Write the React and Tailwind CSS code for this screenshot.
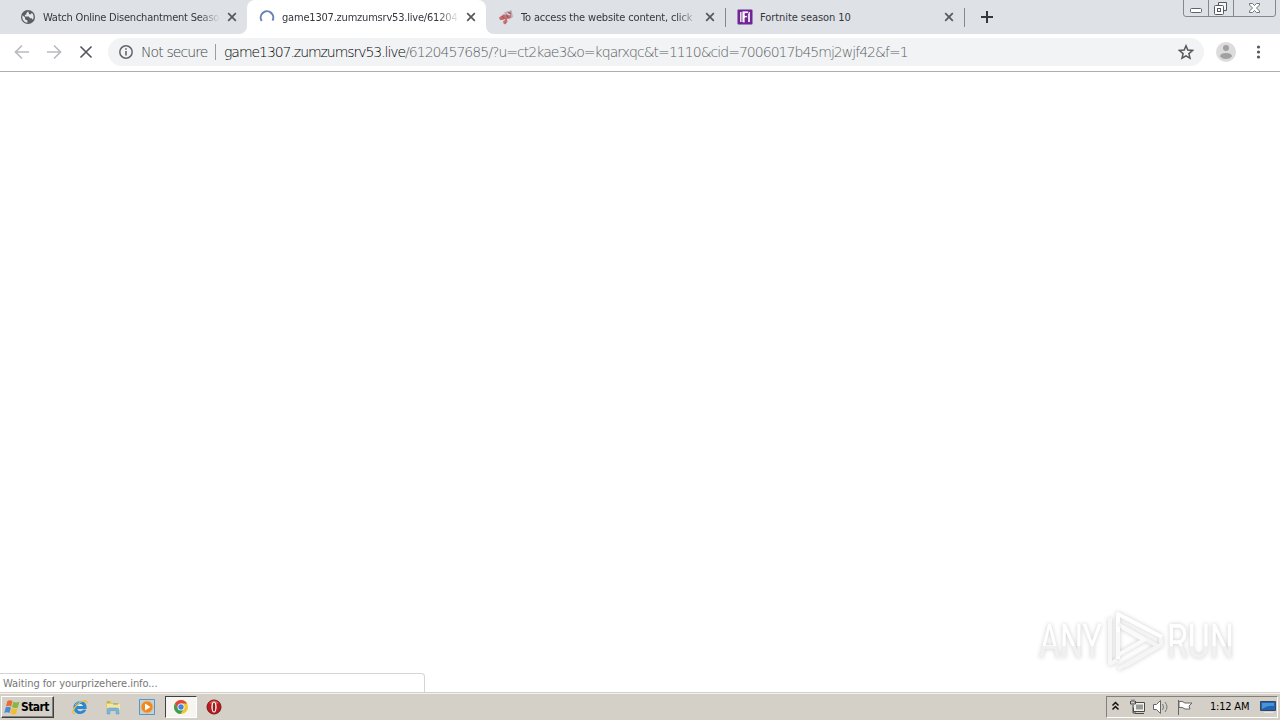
import React from 'react';
import clsx from 'clsx';

const GlobeIcon = () => (
  <svg width="16" height="16" viewBox="0 0 16 16">
    <circle cx="8" cy="8" r="7" fill="#5a5f66" />
    <path d="M2.600 6.200 5 8.600v1.600l2.400 1.200v2.300C4.500 13.500 2.300 11 2.300 8Z" fill="#e6e8ec" />
    <path d="M8.200 2.300 6.300 4.200v1.500H4.900v1.700h3.800l1.400 1.900h1.600l1.200 1.400c1.400-2.600.6-5.500-1.200-7l-.7 1.500H9.200Z" fill="#e6e8ec" />
  </svg>
);

const Spinner = () => (
  <svg width="16" height="16" viewBox="0 0 16 16" fill="none">
    <path d="M2.700 12A6.300 6.300 0 1 1 13.500 11.600" stroke="#6482b4" strokeWidth="2" />
  </svg>
);

const MegaphoneIcon = () => (
  <svg width="16" height="16" viewBox="0 0 16 16">
    <path d="M6 3.500 13.500 1l1.500 7-4 2.500Z" fill="#b9aeb4" />
    <path d="M1 8.500 6 5l2 1.500 4.500-4 .5 6-4 1.500.5 2.500-2 3-2-1-.5-3.500L2 11Z" fill="#c66d70" />
    <path d="m4 7 2.500 3M8 5.500 10.500 9M10 3.500l3 1" stroke="#8e565d" strokeWidth="1" />
    <path d="M9 4.500 12 6M5 11.500l2-1" stroke="#eed9dc" strokeWidth="1.200" />
  </svg>
);

const FortniteIcon = () => (
  <svg width="16" height="16" viewBox="0 0 16 16">
    <rect x="0.500" y="0.500" width="15" height="15" rx="1" fill="#6f2592" />
    <path d="M3 3h2v10H3zM11 3h2v10h-2z" fill="#e9d9ef" />
    <path d="M5 2h6.500l-.3 2.500H8v2h2.300v2.300H8V14l-3-.5Z" fill="#fff" stroke="#6f2592" strokeWidth=".8" />
  </svg>
);

const CloseIcon = () => (
  <svg width="10" height="10" viewBox="0 0 10 10" className="shrink-0">
    <path d="m1.200 1.200 7.600 7.600M8.800 1.200 1.200 8.800" stroke="#55585d" strokeWidth="1.700" />
  </svg>
);

const tabs = [
  { title: 'Watch Online Disenchantment Seaso', icon: <GlobeIcon />, spacing: 'tracking-[-0.22px]', fade: true },
  { title: 'game1307.zumzumsrv53.live/61204', icon: <Spinner />, spacing: 'tracking-[-0.2px]', active: true, fade: true },
  { title: 'To access the website content, click', icon: <MegaphoneIcon />, spacing: 'tracking-[-0.16px]', fade: true, divider: true },
  { title: 'Fortnite season 10', icon: <FortniteIcon />, spacing: 'tracking-[-0.07px]', divider: true },
];

const Tab = ({ tab }) => (
  <div className={clsx('relative flex h-[34px] w-[239px] items-center pl-3', tab.active && 'rounded-t-lg bg-white')}>
    {tab.active && (
      <>
        <svg className="absolute bottom-0 -left-2" width="8" height="8"><path d="M8 0v8H0A8 8 0 0 0 8 0Z" fill="#fff" /></svg>
        <svg className="absolute -right-2 bottom-0" width="8" height="8"><path d="M0 0v8h8A8 8 0 0 1 0 0Z" fill="#fff" /></svg>
      </>
    )}
    <span className="shrink-0">{tab.icon}</span>
    <span
      className={clsx(
        'ml-[7px] w-[177px] shrink-0 overflow-hidden pt-px text-[11px] leading-4 whitespace-nowrap text-[#34373c]',
        tab.spacing,
        tab.fade && '[mask-image:linear-gradient(to_right,black_88%,transparent)]'
      )}
    >
      {tab.title}
    </span>
    <span className="ml-[7px] flex"><CloseIcon /></span>
    {tab.divider && <span className="absolute top-[8px] -right-px h-[19px] w-px bg-[#85888e]" />}
  </div>
);

const WindowControls = () => (
  <svg width="93" height="18" viewBox="0 0 93 18" fill="none" className="ml-auto mr-1 self-start">
    <path d="M.5 0v14q0 2.500 2.500 2.500h87q2.500 0 2.500-2.500V0M25.500 0v16M50.500 0v16" stroke="#85888e" />
    <rect x="7.500" y="8.500" width="11" height="4" rx="1" fill="#fff" stroke="#606368" />
    <path d="M35.500 5V2.500h8v8H41" stroke="#55585d" fill="#f5f6f8" />
    <rect x="31.500" y="5.500" width="9" height="9" rx="1" fill="#fff" stroke="#55585d" />
    <rect x="34.500" y="8.500" width="3" height="3" stroke="#55585d" />
    <path d="M66.500 3.500h3l2 2 2-2h3v1.500L73.500 8l3 3v1.500h-3l-2-2-2 2h-3V11l3-3-3-3Z" fill="#fff" stroke="#70747a" />
  </svg>
);

const Toolbar = () => (
  <div className="flex h-[38px] items-center border-b border-[#adadad] bg-white">
    <svg width="108" height="36" viewBox="0 0 108 36" fill="none" strokeWidth="1.700" className="-mt-0.5 shrink-0">
      <path d="M29 18H16M22 11.500 15.500 18l6.500 6.500" stroke="#b9bbbe" />
      <path d="M47 18h13M54 11.500l6.500 6.500-6.500 6.500" stroke="#b9bbbe" />
      <path d="m80.500 12.500 11 11M91.500 12.500l-11 11" stroke="#55585d" strokeWidth="1.700" />
    </svg>
    <div className="-mt-0.5 flex h-7 w-[1096px] items-center rounded-full bg-[#f1f3f4] pl-[10px] font-['DejaVu_Sans_Light','DejaVu_Sans_Condensed',sans-serif] text-[14px] font-extralight">
      <svg width="16" height="16" viewBox="0 0 16 16" fill="none">
        <circle cx="8" cy="8" r="6.200" stroke="#62666b" strokeWidth="1.500" />
        <path d="M8 7v4.500M8 4.200v1.600" stroke="#62666b" strokeWidth="1.600" />
      </svg>
      <span className="ml-[7px] w-[74px] pt-0.5 whitespace-nowrap tracking-[-0.9px] text-[#404348]">Not secure</span>
      <span className="h-4 w-px bg-[#9a9da1]" />
      <span className="ml-2 pt-0.5 whitespace-nowrap text-[#5c6064]">
        <span className="tracking-[-1.05px] text-black">game1307.zumzumsrv53.live</span>
        <span className="tracking-[-0.97px]">/6120457685/?u=ct2kae3&amp;o=kqarxqc&amp;t=1110&amp;cid=7006017b45mj2wjf42&amp;f=1</span>
      </span>
      <svg width="16" height="16" viewBox="0 0 16 16" className="mr-[10px] ml-auto" fill="none">
        <path d="m8 1.800 1.800 4.300 4.700.4-3.600 3.100 1.100 4.600L8 11.800l-4 2.400 1.100-4.600-3.600-3.100 4.700-.4Z" stroke="#55585d" strokeWidth="1.500" />
      </svg>
    </div>
    <svg width="76" height="36" viewBox="0 0 76 36" className="-mt-0.5">
      <circle cx="22" cy="18" r="10" fill="#dcdcdc" />
      <circle cx="22" cy="14" r="3" fill="#a1a1a1" />
      <path d="M16 22.500q0-3.500 6-3.500t6 3.500q-2.500 2.500-6 2.500t-6-2.500Z" fill="#a1a1a1" />
      <g fill="#55585d">
        <circle cx="54.500" cy="13" r="1.600" />
        <circle cx="54.500" cy="18" r="1.600" />
        <circle cx="54.500" cy="23" r="1.600" />
      </g>
    </svg>
  </div>
);

const AnyRunLogo = () => (
  <div className="absolute top-[607px] left-[1036px] flex h-[68px] w-[204px] items-center [filter:drop-shadow(0_0_2px_rgba(0,0,0,0.2))]">
    <svg width="204" height="68" viewBox="0 0 204 68" fill="none" className="overflow-visible">
      <defs>
        <linearGradient id="shade" x1="0" y1="0" x2="0" y2="1">
          <stop offset=".58" stopColor="#fff" />
          <stop offset=".58" stopColor="#f1f1f1" />
        </linearGradient>
      </defs>
      <g fill="url(#shade)" fontFamily="Roboto, 'Liberation Sans', sans-serif" fontSize="48" fontWeight="400">
        <text x="3" y="51" textLength="63" lengthAdjust="spacingAndGlyphs">ANY</text>
        <text x="131" y="51" textLength="67" lengthAdjust="spacingAndGlyphs">RUN</text>
      </g>
      <g strokeWidth="4" strokeLinejoin="round">
        <path d="M82 52V7l44 23" stroke="#fff" />
        <path d="M82 17 122 39 82 62" stroke="#f5f5f5" />
        <path d="M82 25v23l26-15-22-13" stroke="#fafafa" />
        <path d="M74 11v46l7-4" stroke="#f7f7f7" />
        <path d="m89 59 36-21v-7" stroke="#f5f5f5" />
      </g>
    </svg>
  </div>
);

const WindowsFlag = () => (
  <svg width="18" height="17" viewBox="0 0 17 16">
    <path d="M4 2q2.500-1.500 5 0L7.800 7q-2.500-1.500-5 0Z" fill="#ed6b31" />
    <path d="M9.800 2.500q2.500 1.500 5.700 0L14 8q-2.700 1.200-5.400-.5Z" fill="#86b83d" />
    <path d="M2.500 8q2.500-1.500 5 0l-1.300 5.200q-2.500-1.500-5 0Z" fill="#4b8bd4" />
    <path d="M8.300 8.500q2.700 1.500 5.500.3l-1.500 5.300q-2.700 1.200-5.300-.5Z" fill="#f4bd30" />
  </svg>
);

const InternetExplorerIcon = () => (
  <svg width="18" height="18" viewBox="0 0 18 18" fill="none">
    <path d="M15.500 11H6.300c.4 2.500 4.300 3.200 5.700.8h3.200C12.500 18.500 2.500 17 2.500 9.500S14 .5 15.500 8Z" fill="#2b87cf" />
    <path d="M6.300 8h5.700c-.8-2.800-4.900-2.800-5.700 0Z" fill="#e6f2f7" />
    <path d="M16 5.500c.5-5-6-2.500-10 1.500S0 16 4 15.500" stroke="#e8bd49" strokeWidth="1.400" />
    <path d="M4 7q2-4 6-4" stroke="#7fc4ee" />
  </svg>
);

const FolderIcon = () => (
  <svg width="18" height="18" viewBox="0 0 18 18">
    <path d="M2 3h5l1 2h7v7H2Z" fill="#e6c967" />
    <path d="M3 6h13v8H3Z" fill="#f6e4a0" />
    <path d="M3 4h3M9 6h5" stroke="#72aa72" />
    <path d="M3 16v-4q0-2 2-2h8q2 0 2 2v4h-3v-3H6v3Z" fill="#78b5db" stroke="#5c9ecb" strokeWidth=".5" />
  </svg>
);

const MediaPlayerIcon = () => (
  <svg width="18" height="18" viewBox="0 0 18 18">
    <path d="M1.500 1.500h15v15h-15Z" fill="#b6d6ef" stroke="#5994c5" />
    <circle cx="9" cy="9" r="6" fill="#ef8820" stroke="#f7b75d" />
    <path d="m7 5.500 5.500 3.500L7 12.500Z" fill="#fff" />
  </svg>
);

const ChromeIcon = () => (
  <svg width="16" height="16" viewBox="0 0 16 16">
    <circle cx="8" cy="8" r="7" fill="#f4c62d" />
    <path d="M1.900 4.500A7 7 0 0 1 14.100 4.500H8L5 10Z" fill="#dd4a3d" />
    <path d="M1.900 4.500A7 7 0 0 0 7.500 15L11 9.700 5 9.700Z" fill="#3b9e58" />
    <circle cx="8" cy="8" r="3.500" fill="#fff" />
    <circle cx="8" cy="8" r="2.700" fill="#4382e4" />
  </svg>
);

const OperaIcon = () => (
  <svg width="18" height="18" viewBox="0 0 18 18">
    <circle cx="9" cy="9" r="7" fill="#b91c20" stroke="#7c1413" />
    <path d="M4 5q5-5 10 0l-5 2Z" fill="#d95652" />
    <ellipse cx="9" cy="9" rx="2.600" ry="5.600" fill="#fff" />
    <ellipse cx="9" cy="9" rx="1.300" ry="4.600" fill="#8d2423" />
  </svg>
);

const TrayIcons = () => (
  <svg width="94" height="20" viewBox="0 0 94 20" fill="none">
    <path d="m5.500 8.500 3-3 3 3M5.500 12.500l3-3 3 3" stroke="#111" strokeWidth="1.500" />
    <path d="M27.500 5.500h10v9h-11v-4" fill="#f4f4f1" stroke="#494949" />
    <path d="M29 7.500h7v5h-7Z" fill="#9a9a96" />
    <path d="M28 16.500h9" stroke="#494949" />
    <path d="M23.500 4v3h5V4M25 5V2.500M27 5V2.500M26 8v8h3" stroke="#494949" />
    <path d="M46.500 7.500h3l4-4v13l-4-4h-3Z" fill="#fff" stroke="#666" />
    <path d="M55.500 7q2 3 0 6M58 5q4 5 0 10" stroke="#777" />
    <path d="M71.500 3v15" stroke="#666" />
    <path d="M72 4.500q3-1 6 1.500h7l-3 3 1 3h-5q-3-2.500-6-1.500Z" fill="#fff" stroke="#666" />
  </svg>
);

const Taskbar = () => (
  <div className="flex h-[27px] items-center border-t border-[#f4f2ed] bg-[#d4d0c8]">
    <button className="ml-px flex h-[22px] w-[53px] items-center border border-t-white border-r-[#404040] border-b-[#404040] border-l-white pl-[1px] text-[12px] font-bold tracking-[-0.6px] text-black shadow-[inset_-1px_-1px_0_#808080]">
      <WindowsFlag />
      <span>Start</span>
    </button>
    <div className="ml-[17px] flex items-center">
      <InternetExplorerIcon />
      <span className="ml-[15px]"><FolderIcon /></span>
      <span className="ml-4"><MediaPlayerIcon /></span>
      <span className="ml-[9px] flex h-[22px] w-8 items-center justify-center border border-t-[#404040] border-r-white border-b-white border-l-[#404040] bg-[#f7f5f1]">
        <ChromeIcon />
      </span>
      <span className="ml-2"><OperaIcon /></span>
    </div>
    <div className="mr-0.5 ml-auto flex h-[22px] w-[172px] items-center border border-t-[#808080] border-r-white border-b-white border-l-[#808080]">
      <TrayIcons />
      <span className="ml-2 w-[46px] pt-px pl-px text-[11px] whitespace-nowrap tracking-[-0.2px] text-black">1:12 AM</span>
      <svg width="16" height="14" viewBox="0 0 16 14" className="ml-[5px]">
        <path d="M.5 1.500h15v9H.5Z" fill="#1d64b8" stroke="#35465b" />
        <path d="M2 3h12v3Q8 5 2 9Z" fill="#4b92d6" />
        <path d="M4 12.500h9" stroke="#e1e8ee" />
      </svg>
    </div>
  </div>
);

export default function App() {
  return (
    <div className="relative flex h-[720px] w-[1280px] flex-col overflow-hidden bg-white font-['DejaVu_Sans_Condensed','DejaVu_Sans',sans-serif]">
      <header>
        <div className="flex h-[34px] bg-[#dee1e6] pl-2">
          {tabs.map((tab) => <Tab key={tab.title} tab={tab} />)}
          <svg width="14" height="34" viewBox="0 0 14 34" className="ml-[17px]">
            <path d="M6 11v12M0 17h12" stroke="#34373c" strokeWidth="2" />
          </svg>
          <WindowControls />
        </div>
        <Toolbar />
      </header>
      <main className="flex min-h-0 flex-1 flex-col justify-end">
        <div className="flex h-[19px] w-[425px] items-center rounded-tr border-t border-r border-[#d5d5d5] pt-0.5 pl-[3px] text-[11px] tracking-[-0.07px] text-[#777]">
          Waiting for yourprizehere.info...
        </div>
      </main>
      <div className="h-px bg-[#d4d0c8]" />
      <Taskbar />
      <AnyRunLogo />
    </div>
  );
}
